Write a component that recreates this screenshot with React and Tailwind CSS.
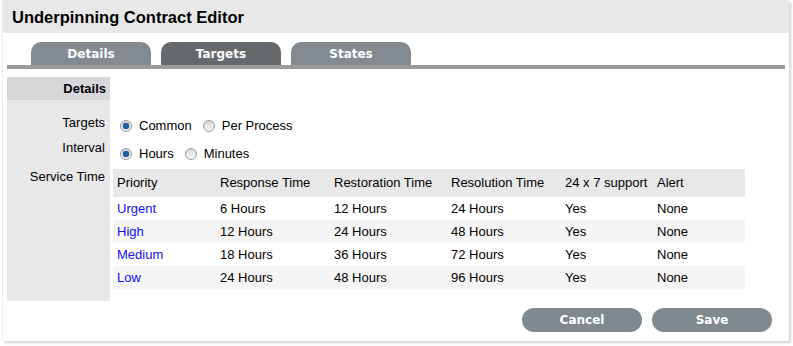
import React from 'react'

const ROWS = [
  { priority: 'Urgent', response: '6 Hours', restoration: '12 Hours', resolution: '24 Hours' },
  { priority: 'High', response: '12 Hours', restoration: '24 Hours', resolution: '48 Hours' },
  { priority: 'Medium', response: '18 Hours', restoration: '36 Hours', resolution: '72 Hours' },
  { priority: 'Low', response: '24 Hours', restoration: '48 Hours', resolution: '96 Hours' },
]

const COLS = 'grid grid-cols-[103px_114px_117px_114px_92px_1fr] pl-[4px] items-center'

const Radio = ({ checked }) => (
  <span className="inline-flex h-[12px] w-[12px] items-center justify-center rounded-full border border-[#9a9a9a] bg-gradient-to-b from-[#d9d9d9] to-[#f7f7f7]">
    {checked && <span className="h-[6px] w-[6px] rounded-full bg-[#1f5f9e] shadow-[0_0_1px_#0b3a6a]" />}
  </span>
)

const RadioGroup = ({ options, className }) => (
  <div className={`flex items-center pl-[7px] ${className}`}>
    {options.map((opt, i) => (
      <label key={opt.label} className={`flex items-center gap-[7px] ${i > 0 ? 'ml-[11px]' : ''}`}>
        <Radio checked={opt.checked} />
        <span>{opt.label}</span>
      </label>
    ))}
  </div>
)

const Tab = ({ label, active }) => (
  <div
    className={`flex h-[23px] w-[120px] items-center justify-center rounded-t-[10px] text-[12px] font-bold text-white ${
      active ? 'bg-[#65696c]' : 'bg-[#838b90]'
    }`}
    style={{ fontFamily: 'Tahoma, "DejaVu Sans", sans-serif' }}
  >
    {label}
  </div>
)

const Button = ({ label }) => (
  <button
    type="button"
    className="flex h-[24px] w-[120px] items-center justify-center rounded-full bg-[#80898d] text-[12px] font-bold text-white"
    style={{ fontFamily: 'Tahoma, "DejaVu Sans", sans-serif' }}
  >
    {label}
  </button>
)

export default function App() {
  return (
    <div
      className="h-[346px] w-[793px] bg-white text-[13px] leading-[16px] text-black"
      style={{ fontFamily: '"Liberation Sans", Arial, sans-serif' }}
    >
      <div className="ml-[2px] flex h-[341px] w-[787px] flex-col border-l border-[#ececec] bg-white shadow-[2px_2px_3px_rgba(0,0,0,0.18)]">
        <header className="flex h-[33px] items-center bg-[#e8e8e8] pl-[9px] text-[16.5px] font-bold">
          Underpinning Contract Editor
        </header>

        <div className="mt-[9px] flex gap-[10px] pl-[28px]">
          <Tab label="Details" />
          <Tab label="Targets" active />
          <Tab label="States" />
        </div>
        <div className="mx-[4px] h-[4px] bg-[#9b9b9b]" />

        <div className="mt-[8px] flex pl-[4px]">
          <div className="flex h-[224px] w-[103px] flex-col bg-[#e8e8e8] text-right">
            <div className="flex h-[23px] items-center justify-end bg-[#d6d7d9] pr-[4px] font-bold">Details</div>
            <div className="mt-[15px] pr-[5px]">Targets</div>
            <div className="mt-[9px] pr-[5px]">Interval</div>
            <div className="mt-[13px] pr-[5px]">Service Time</div>
          </div>

          <div className="ml-[3px] flex w-[632px] flex-col">
            <RadioGroup
              className="mt-[41px]"
              options={[
                { label: 'Common', checked: true },
                { label: 'Per Process' },
              ]}
            />
            <RadioGroup
              className="mt-[12px]"
              options={[
                { label: 'Hours', checked: true },
                { label: 'Minutes' },
              ]}
            />

            <div className="mt-[7px]">
              <div className={`${COLS} h-[28px] bg-[#e8e8e8]`}>
                <span>Priority</span>
                <span>Response Time</span>
                <span>Restoration Time</span>
                <span>Resolution Time</span>
                <span>24 x 7 support</span>
                <span>Alert</span>
              </div>
              {ROWS.map((row, i) => (
                <div key={row.priority} className={`${COLS} h-[23px] ${i % 2 ? 'bg-[#f5f5f5]' : 'bg-white'}`}>
                  <a href="#" className="pt-[1px] text-[#1010f5]">{row.priority}</a>
                  <span className="pt-[1px]">{row.response}</span>
                  <span className="pt-[1px]">{row.restoration}</span>
                  <span className="pt-[1px]">{row.resolution}</span>
                  <span className="pt-[1px]">Yes</span>
                  <span className="pt-[1px]">None</span>
                </div>
              ))}
            </div>
          </div>
        </div>

        <div className="mt-[7px] flex justify-end gap-[10px] pr-[17px]">
          <Button label="Cancel" />
          <Button label="Save" />
        </div>
      </div>
    </div>
  )
}
